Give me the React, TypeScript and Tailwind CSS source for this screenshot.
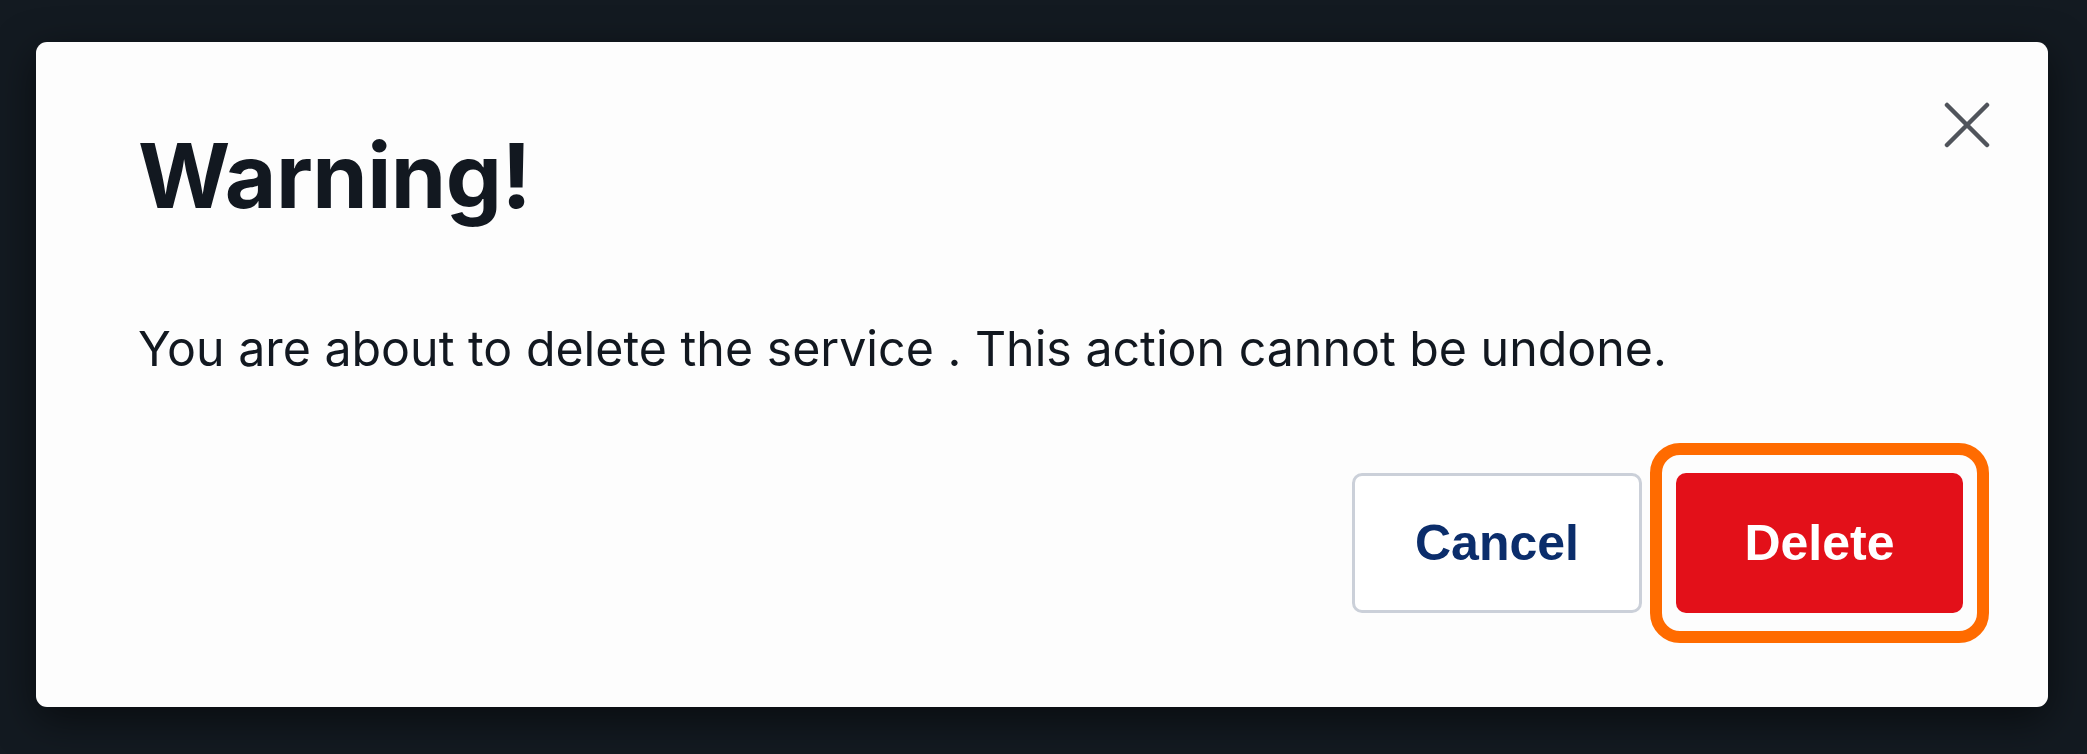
import { useState } from "react";

function CloseIcon() {
    return (
        <svg width="46" height="46" viewBox="0 0 46 46" fill="none">
            <path d="M3 3L43 43M43 3L3 43" stroke="#50545b" strokeWidth="4.5" strokeLinecap="round" />
        </svg>
    );
}

export default function App() {
    const [open, setOpen] = useState(true);

    return (
        <div className="min-h-screen w-full bg-[#131a21] pl-9 pr-[39px] pt-[42px] pb-[47px] font-['Inter',sans-serif]">
            <div className={`${open ? 'flex' : 'hidden'} relative flex-col rounded-[11px] bg-[#fdfdfd] pl-[102px] pr-[59px] pt-[89px] pb-[64px] shadow-[0_12px_40px_rgba(0,0,0,0.55)]`}>
                <button
                    onClick={() => setOpen(false)}
                    className="absolute right-[58px] top-[60px] cursor-pointer"
                    aria-label="Close"
                >
                    <CloseIcon />
                </button>

                <h1 className="text-[89px] font-bold leading-none tracking-[-0.5px] text-[#121820]">
                    Warning!
                </h1>

                <p className="mt-[105px] text-[48.3px] leading-none text-[#121820]">
                    You are about to delete the service . This action cannot be undone.
                </p>

                <div className="mt-[70px] flex items-center justify-end gap-2 font-['Liberation_Sans',Arial,sans-serif]">
                    <button className="h-[140px] w-[290px] cursor-pointer rounded-[10px] border-[3px] border-[#cbd0d9] bg-white text-[50px] font-bold text-[#0b2d6b]">
                        Cancel
                    </button>
                    <div className="rounded-[30px] border-[12px] border-[#ff6b00] px-[14px] py-[18px]">
                        <button className="flex h-[140px] w-[287px] cursor-pointer items-center justify-center rounded-[10px] bg-[#e31019] text-[50px] font-bold text-white">
                            Delete
                        </button>
                    </div>
                </div>
            </div>
        </div>
    );
}
